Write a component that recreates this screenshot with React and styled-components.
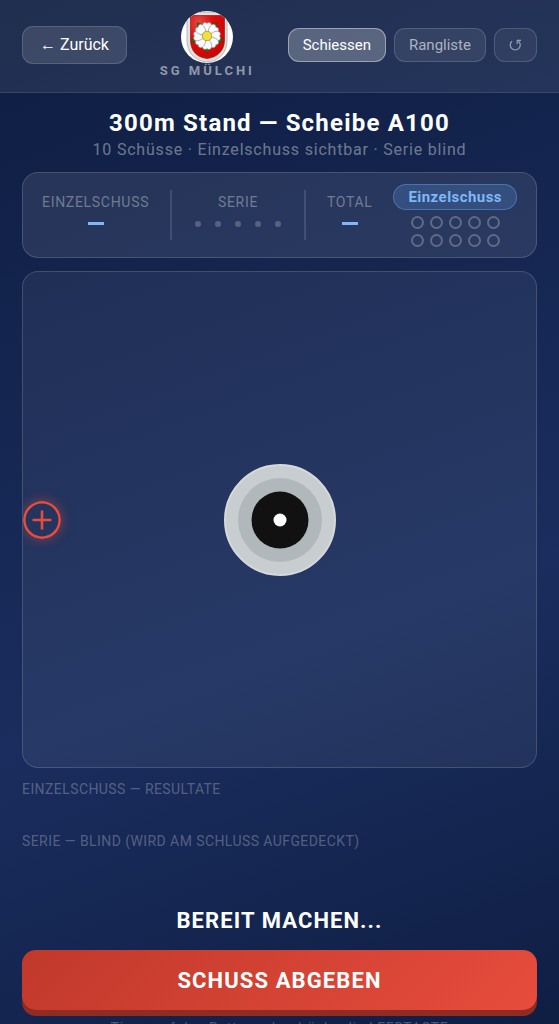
import React, {useState} from "react";
import styled, {createGlobalStyle} from "styled-components";

const GlobalStyle = createGlobalStyle`
    * {
        box-sizing: border-box;
    }
    body {
        margin: 0;
        font-family: Roboto, "Liberation Sans", sans-serif;
        color: #fff;
    }
    button {
        font-family: inherit;
        cursor: pointer;
    }
`;

export const Page = styled.div`
    min-height: 100vh;
    display: flex;
    flex-direction: column;
    background: linear-gradient(160deg, #0e1d41 0%, #1a2d5e 60%, #0e1d41 100%);
`;

export const Header = styled.header`
    display: flex;
    align-items: center;
    justify-content: space-between;
    padding: 11px 22px 14px;
    background: rgba(255,255,255,0.08);
    border-bottom: 1px solid rgba(255,255,255,0.1);
`;

export const HeaderButton = styled.button`
    height: ${props => props.$large ? 38 : 34}px;
    padding: 0 ${props => props.$large ? 17 : 14}px;
    border-radius: 11px;
    border: 1px solid rgba(255,255,255,${props => props.$active ? 0.4 : 0.15});
    background: rgba(255,255,255,${props => props.$active ? 0.25 : props.$large ? 0.12 : 0.08});
    color: ${props => props.$active || props.$large ? "#fff" : "rgba(255,255,255,0.6)"};
    font-size: ${props => props.$large ? 16 : 15}px;
`;

export const IconButton = styled(HeaderButton)`
    display: flex;
    align-items: center;
    justify-content: center;
    width: 43px;
    padding: 0;
    background: rgba(255,255,255,0.06);
    color: rgba(255,255,255,0.5);
`;

export const Brand = styled.div`
    display: flex;
    flex-direction: column;
    align-items: center;
    font-size: 13px;
    line-height: 15px;
    font-weight: 700;
    letter-spacing: 3px;
    color: rgba(255,255,255,0.5);
`;

export const Nav = styled.nav`
    display: flex;
    align-items: center;
    gap: 8px;
`;

export const Main = styled.main`
    display: flex;
    flex-direction: column;
    padding: 14px 22px 0;
`;

export const Title = styled.h1`
    margin: 0;
    text-align: center;
    font-size: 24px;
    line-height: 32px;
    font-weight: 700;
    letter-spacing: 0.05em;
`;

export const Subtitle = styled.p`
    margin: 0 0 12px;
    text-align: center;
    font-size: 16px;
    line-height: 21px;
    letter-spacing: 0.05em;
    color: rgba(255,255,255,0.4);
`;

export const Panel = styled.section`
    border: 1px solid rgba(255,255,255,0.15);
    border-radius: 16px;
    background: rgba(255,255,255,0.09);
`;

export const ScorePanel = styled(Panel)`
    display: flex;
    align-items: center;
    justify-content: space-between;
    height: 86px;
    margin-bottom: 13px;
    padding: 0 19px;
`;

export const Score = styled.div`
    display: flex;
    flex-direction: column;
    align-items: center;
    gap: 9px;
    height: 46px;
`;

export const Label = styled.span`
    font-size: 14px;
    line-height: 20px;
    letter-spacing: 0.05em;
    color: rgba(255,255,255,0.35);
`;

export const EmptyValue = styled.span`
    width: 16px;
    height: 3px;
    margin-top: 1px;
    background: #7eb8f7;
`;

export const Divider = styled.div`
    width: 2px;
    height: 50px;
    background: rgba(255,255,255,0.12);
`;

export const Dots = styled.div`
    display: flex;
    gap: 14px;
    padding: 0 2px;
`;

export const Dot = styled.span`
    width: 6px;
    height: 6px;
    border-radius: 50%;
    background: rgba(255,255,255,0.22);
`;

export const Phase = styled.div`
    display: flex;
    flex-direction: column;
    align-items: center;
    gap: 6px;
`;

export const Badge = styled.span`
    height: 26px;
    padding: 0 14px;
    border: 1px solid rgba(100,170,255,0.4);
    border-radius: 13px;
    background: rgba(100,170,255,0.2);
    color: #7eb8f7;
    font-size: 15px;
    line-height: 24px;
    font-weight: 700;
    letter-spacing: 0.03em;
`;

export const Shots = styled.div`
    display: grid;
    grid-template-columns: repeat(5, 13px);
    gap: 5px 6px;
`;

export const Shot = styled.span`
    height: 13px;
    border: 2px solid rgba(255,255,255,0.25);
    border-radius: 50%;
`;

export const Range = styled(Panel)`
    position: relative;
    display: flex;
    align-items: center;
    justify-content: center;
    height: 497px;
    margin-bottom: 11px;
    overflow: hidden;
    background: rgba(255,255,255,0.06);
`;

export const Sight = styled.svg`
    position: absolute;
    left: 0;
    top: 50%;
    transform: translateY(-50%);
    border-radius: 50%;
    box-shadow: 0 0 12px rgba(231,76,60,0.5);
`;

export const Results = styled.section`
    height: 52px;
`;

export const ResultsTitle = styled.h2`
    margin: 0;
    font-size: 14px;
    line-height: 20px;
    font-weight: 400;
    letter-spacing: 0.03em;
    color: rgba(255,255,255,0.27);
`;

export const Status = styled.p`
    margin: 22px 0 13px;
    text-align: center;
    font-size: 22px;
    line-height: 32px;
    font-weight: 700;
    letter-spacing: 0.05em;
`;

export const Fire = styled.button`
    height: 60px;
    border: 0;
    border-radius: 14px;
    background: linear-gradient(135deg, #c0392b, #e74c3c);
    box-shadow: 0 6px 0 #922b21;
    color: #fff;
    font-size: 22px;
    font-weight: 700;
    letter-spacing: 0.05em;
`;

export const Hint = styled.p`
    margin: 8px 0 20px;
    text-align: center;
    font-size: 14px;
    line-height: 20px;
    letter-spacing: 0.05em;
    color: rgba(255,255,255,0.25);
`;

const LEAF_ANGLES = [36, 108, 180, 252, 324];
const PETAL_ANGLES = [0, 45, 90, 135, 180, 225, 270, 315];

const Crest = () => (
    <svg width="52" height="52" viewBox="0 0 52 52" aria-hidden="true">
        <defs>
            <clipPath id="crestClip">
                <circle cx="26" cy="26" r="26"/>
            </clipPath>
            <radialGradient id="shieldRed" cx="25%" cy="18%" r="90%">
                <stop offset="0" stopColor="#e64b43"/>
                <stop offset="0.45" stopColor="#dc0d0b"/>
                <stop offset="1" stopColor="#c80705"/>
            </radialGradient>
        </defs>
        <g clipPath="url(#crestClip)">
            <rect width="52" height="52" fill="#fff"/>
            <path d="M6 1H46V29C46 42 38 50 26 51C14 50 6 42 6 29Z" fill="#e2e2e2" stroke="#aaa" strokeWidth="0.800"/>
            <path d="M9.500 4.500H43.500V29C43.500 40 36 46.500 26 47.500C16 46.500 9.500 40 9.500 29Z" fill="url(#shieldRed)" stroke="#9d1714" strokeWidth="0.700"/>
        </g>
        {LEAF_ANGLES.map(a => (
            <path key={a} transform={`rotate(${a} 26 25)`} d="M26 8.500L22.500 14L26 17L29.500 14Z" fill="#078a16" stroke="#164916" strokeWidth="0.500"/>
        ))}
        <circle cx="26" cy="25" r="11" fill="#f4f4f4"/>
        {PETAL_ANGLES.map(a => (
            <path key={a} transform={`rotate(${a} 26 25)`} d="M26 23C21.500 20 20 14 22.500 12C24.500 11 25.500 12 26 12.500C26.500 12 27.500 11 29.500 12C32 14 30.500 20 26 23Z" fill="#fafafa" stroke="#888" strokeWidth="0.600"/>
        ))}
        <circle cx="26" cy="25" r="4.800" fill="#f2df3b" stroke="#8b7a20" strokeWidth="0.600"/>
    </svg>
);

const RestartIcon = () => (
    <svg width="13" height="13" viewBox="0 0 13 13" fill="none" stroke="currentColor" strokeWidth="1.200" aria-hidden="true">
        <path d="M3 3.200A5 5 0 1 0 9.500 3.200"/>
        <path d="M8.200 6V2.300H12"/>
    </svg>
);

const Target = () => (
    <svg width="112" height="112" viewBox="0 0 112 112" role="img" aria-label="Scheibe A100">
        <circle cx="56" cy="56" r="55" fill="#c8cdd0" stroke="#d6d9dc" strokeWidth="2"/>
        <circle cx="56" cy="56" r="42" fill="#b0b8bc"/>
        <circle cx="56" cy="56" r="28.500" fill="#111"/>
        <circle cx="56" cy="56" r="6.500" fill="#fff"/>
    </svg>
);

const App = () => {
    const [view, setView] = useState("Schiessen");

    return (
        <Page>
            <GlobalStyle/>
            <Header>
                <HeaderButton $large>← Zurück</HeaderButton>
                <Brand>
                    <Crest/>
                    SG MÜLCHI
                </Brand>
                <Nav>
                    {["Schiessen", "Rangliste"].map(name => (
                        <HeaderButton
                            key={name}
                            $active={view === name}
                            onClick={() => setView(name)}
                        >
                            {name}
                        </HeaderButton>
                    ))}
                    <IconButton aria-label="Neu starten">
                        <RestartIcon/>
                    </IconButton>
                </Nav>
            </Header>
            <Main>
                <Title>300m Stand — Scheibe A100</Title>
                <Subtitle>10 Schüsse · Einzelschuss sichtbar · Serie blind</Subtitle>
                <ScorePanel>
                    <Score>
                        <Label>EINZELSCHUSS</Label>
                        <EmptyValue/>
                    </Score>
                    <Divider/>
                    <Score>
                        <Label>SERIE</Label>
                        <Dots>
                            {[0, 1, 2, 3, 4].map(i => <Dot key={i}/>)}
                        </Dots>
                    </Score>
                    <Divider/>
                    <Score>
                        <Label>TOTAL</Label>
                        <EmptyValue/>
                    </Score>
                    <Phase>
                        <Badge>Einzelschuss</Badge>
                        <Shots>
                            {Array.from({length: 10}, (_, i) => <Shot key={i}/>)}
                        </Shots>
                    </Phase>
                </ScorePanel>
                <Range>
                    <Target/>
                    <Sight width="38" height="38" viewBox="0 0 38 38" aria-hidden="true">
                        <circle cx="19" cy="19" r="17.700" fill="none" stroke="#e74c3c" strokeWidth="2.600"/>
                        <path d="M19 9.500V28.500M9.500 19H28.500" stroke="#e74c3c" strokeWidth="2.600"/>
                    </Sight>
                </Range>
                <Results>
                    <ResultsTitle>EINZELSCHUSS — RESULTATE</ResultsTitle>
                </Results>
                <Results>
                    <ResultsTitle>SERIE — BLIND (WIRD AM SCHLUSS AUFGEDECKT)</ResultsTitle>
                </Results>
                <Status>BEREIT MACHEN...</Status>
                <Fire>SCHUSS ABGEBEN</Fire>
                <Hint>Tippe auf den Button oder drücke die LEERTASTE</Hint>
            </Main>
        </Page>
    );
};

export default App
